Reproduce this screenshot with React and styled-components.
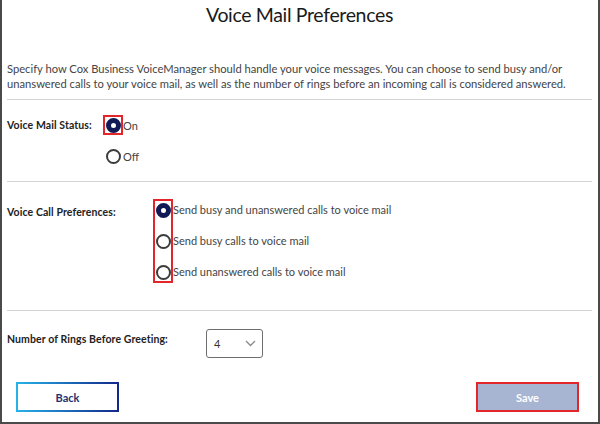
import React, { useState } from "react";
import styled, { createGlobalStyle } from "styled-components";

const Global = createGlobalStyle`
  html, body { margin: 0; padding: 0; background: #fff; }
  body { font-family: Lato, "Open Sans", sans-serif; color: #333; }
  * { box-sizing: border-box; }
`;

const Frame = styled.div`
  width: 600px;
  height: 424px;
  border-left: 2px solid #4a4a4a;
  border-right: 2px solid #4a4a4a;
  border-bottom: 2px solid #4a4a4a;
  padding: 0 6px 0 5px;
  display: flex;
  flex-direction: column;
`;

const Title = styled.h1`
  margin: 3px 0 0;
  font-size: 19.5px;
  letter-spacing: -0.35px;
  font-weight: 400;
  line-height: 24px;
  text-align: center;
  color: #1a1a1a;
`;

const Intro = styled.p`
  margin: 34px 0 0;
  font-size: 11.2px;
  line-height: 15px;
  color: #444;
`;

const Rule = styled.hr`
  border: 0;
  border-top: 1px solid #d4d4d4;
  margin: ${(p) => p.$top}px 0 0;
  width: 100%;
`;

const Row = styled.div`
  display: flex;
  align-items: flex-start;
  margin-top: ${(p) => p.$top}px;
`;

const Label = styled.div`
  width: ${(p) => p.$w}px;
  flex: none;
  font-size: 10.5px;
  font-weight: 700;
  letter-spacing: 0.1px;
  color: #222;
  line-height: 14px;
  padding-top: ${(p) => p.$pt || 0}px;
`;

const Group = styled.div`
  display: flex;
  flex-direction: column;
  gap: ${(p) => p.$gap}px;
`;

const Option = styled.label`
  display: flex;
  align-items: center;
  font-size: 11px;
  color: #444;
  cursor: pointer;
  height: 20px;
`;

const HitBox = styled.span`
  width: 20px;
  height: 20px;
  flex: none;
  display: flex;
  align-items: center;
  justify-content: center;
  outline: ${(p) => (p.$mark ? "2px solid #e3262b" : "none")};
  outline-offset: -2px;
`;

const Dot = styled.span`
  width: 15px;
  height: 15px;
  border-radius: 50%;
  border: ${(p) => (p.$on ? "5px solid #121a55" : "2px solid #3c3c3c")};
  background: #fff;
`;

const Column = styled.div`
  display: flex;
  flex-direction: column;
  outline: 2px solid #e3262b;
  outline-offset: -2px;
  gap: ${(p) => p.$gap}px;
  padding: ${(p) => p.$pad}px 0;
`;

const Labels = styled.div`
  display: flex;
  flex-direction: column;
  gap: ${(p) => p.$gap}px;
  padding: ${(p) => p.$pad}px 0;
`;

const OptText = styled.span`
  font-size: 11px;
  color: #444;
  height: 20px;
  line-height: 20px;
  cursor: pointer;
`;

const Select = styled.div`
  width: 57px;
  height: 29px;
  border: 1px solid #6e6e6e;
  border-radius: 3px;
  display: flex;
  align-items: center;
  justify-content: space-between;
  padding: 0 6px 0 7px;
  font-size: 11px;
  color: #333;
`;

const Buttons = styled.div`
  display: flex;
  justify-content: space-between;
  padding: 0 13px 0 9px;
  margin-top: 24px;
`;

const BackBtn = styled.button`
  width: 103px;
  height: 30px;
  border: 2px solid transparent;
  background:
    linear-gradient(#fff, #fff) padding-box,
    linear-gradient(90deg, #27b3ea, #12278a) border-box;
  font-family: inherit;
  font-size: 11px;
  font-weight: 700;
  color: #1d3272;
`;

const SaveBtn = styled.button`
  width: 103px;
  height: 30px;
  border: 2px solid #e3262b;
  background: #a7b5d3;
  font-family: inherit;
  font-size: 11px;
  font-weight: 700;
  color: #fff;
`;

function Radio({ on, mark, text, onClick }) {
  return (
    <Option onClick={onClick}>
      <HitBox $mark={mark}>
        <Dot $on={on} />
      </HitBox>
      {text}
    </Option>
  );
}

export default function App() {
  const [status, setStatus] = useState("on");
  const [pref, setPref] = useState(0);
  const prefs = [
    "Send busy and unanswered calls to voice mail",
    "Send busy calls to voice mail",
    "Send unanswered calls to voice mail",
  ];
  return (
    <>
      <Global />
      <Frame>
        <Title>Voice Mail Preferences</Title>
        <Intro>
          Specify how Cox Business VoiceManager should handle your voice messages. You can choose to send busy and/or
          unanswered calls to your voice mail, as well as the number of rings before an incoming call is considered answered.
        </Intro>
        <Rule $top={8} />
        <Row $top={15}>
          <Label $w={96} $pt={3}>Voice Mail Status:</Label>
          <Group $gap={11}>
            <Radio on={status === "on"} mark text="On" onClick={() => setStatus("on")} />
            <Radio on={status === "off"} text="Off" onClick={() => setStatus("off")} />
          </Group>
        </Row>
        <Rule $top={15} />
        <Row $top={17}>
          <Label $w={146} $pt={6}>Voice Call Preferences:</Label>
          <Column $gap={11} $pad={1}>
            {prefs.map((p, i) => (
              <HitBox key={p} onClick={() => setPref(i)}>
                <Dot $on={pref === i} />
              </HitBox>
            ))}
          </Column>
          <Labels $gap={11} $pad={1}>
            {prefs.map((p, i) => (
              <OptText key={p} onClick={() => setPref(i)}>{p}</OptText>
            ))}
          </Labels>
        </Row>
        <Rule $top={27} />
        <Row $top={18}>
          <Label $w={199} $pt={3}>Number of Rings Before Greeting:</Label>
          <Select>
            <span>4</span>
            <svg width="11" height="7" viewBox="0 0 11 7">
              <path d="M1 1l4.5 4.5L10 1" fill="none" stroke="#8a8a8a" strokeWidth="1.3" />
            </svg>
          </Select>
        </Row>
        <Buttons>
          <BackBtn>Back</BackBtn>
          <SaveBtn>Save</SaveBtn>
        </Buttons>
      </Frame>
    </>
  );
}
